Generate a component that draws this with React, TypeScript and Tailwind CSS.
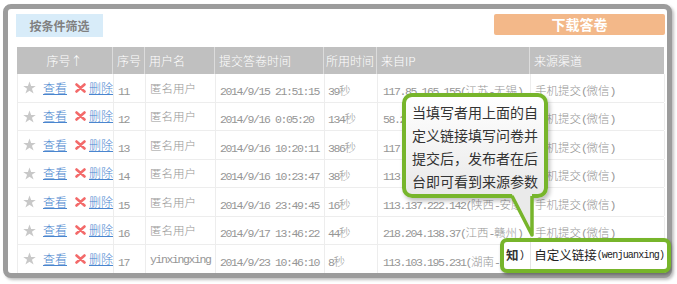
const cjk = "font-['Noto_Sans_CJK_SC',sans-serif]";

type Row = {
  n: number;
  user: string;
  time: string;
  dur: string;
  ip: string;
  ch: string;
};

const rows: Row[] = [
  { n: 11, user: "匿名用户", time: "2014/9/15 21:51:15", dur: "39秒", ip: "117.85.165.155(江苏-无锡)", ch: "手机提交(微信)" },
  { n: 12, user: "匿名用户", time: "2014/9/16 0:05:20", dur: "134秒", ip: "58.211.23.124(江苏-苏州)", ch: "手机提交(微信)" },
  { n: 13, user: "匿名用户", time: "2014/9/16 10:20:11", dur: "386秒", ip: "117.136.45.19(江苏-南京)", ch: "手机提交(微信)" },
  { n: 14, user: "匿名用户", time: "2014/9/16 10:23:47", dur: "38秒", ip: "113.57.182.9(湖北-武汉)", ch: "手机提交(微信)" },
  { n: 15, user: "匿名用户", time: "2014/9/16 23:49:45", dur: "16秒", ip: "113.137.222.142(陕西-安康)", ch: "手机提交(微信)" },
  { n: 16, user: "匿名用户", time: "2014/9/17 13:46:22", dur: "44秒", ip: "218.204.138.37(江西-赣州)", ch: "手机提交(微信)" },
  { n: 17, user: "yinxingxing", time: "2014/9/23 10:46:10", dur: "8秒", ip: "113.103.195.231(湖南-未知)", ch: "自定义链接(wenjuanxing)" },
];

// ascii runs in a narrow mono face, the rest in the CJK face
const Mixed = ({ text }: { text: string }) => {
  const parts = text.match(/[\x00-\x7f]+|[^\x00-\x7f]+/g) ?? [];
  return (
    <span className="whitespace-nowrap">
      {parts.map((p, i) =>
        /^[\x00-\x7f]/.test(p) ? (
          <span key={i} className="font-['Liberation_Mono',monospace] text-[11.5px] tracking-[-1.4px]">
            {p}
          </span>
        ) : (
          <span key={i} className={`${cjk} text-[11.5px] font-light`}>
            {p}
          </span>
        ),
      )}
    </span>
  );
};

const Star = () => (
  <svg width="13" height="13" viewBox="0 0 24 24" className="shrink-0">
    <polygon
      points="12,1 15,9 23.5,9 16.5,14.5 19.5,23 12,18 4.5,23 7.5,14.5 0.5,9 9,9"
      fill="#c8c8c8"
    />
  </svg>
);

const Cross = () => (
  <svg width="11" height="10" viewBox="0 0 11 10" className="shrink-0">
    <path d="M1.5 1.5 L9.5 8.5 M9.5 1.5 L1.5 8.5" stroke="#f36a6a" strokeWidth="2.6" strokeLinecap="round" />
  </svg>
);

const cols = "grid grid-cols-[96px_32px_70px_109px_53px_153px_134px]";

export default function App() {
  return (
    <div className="relative h-[284px] w-[677px] overflow-hidden bg-white pl-[3px] pt-[4px]">
      <div className="h-[274px] w-[669px] overflow-hidden rounded-[8px] border-[5px] border-[#9c9c9c] bg-white shadow-[2px_2px_3px_rgba(0,0,0,0.25)]">
        <div className="flex items-start justify-between pl-[8px] pr-[2px] pt-[5px]">
          <div className={`flex h-[23px] w-[87px] items-center justify-center bg-[#d8ecf9] text-[12px] font-bold text-[#808080] ${cjk}`}>
            按条件筛选
          </div>
          <div className={`flex h-[21px] w-[171px] items-center justify-center rounded-[2px] bg-[#f3b889] text-[14px] font-bold text-white ${cjk}`}>
            下载答卷
          </div>
        </div>

        <div className={`ml-[9px] mt-[10px] w-[647px] ${cjk}`}>
          <div className={`${cols} h-[27px] bg-[#c0c0c0] text-[12px] font-light text-white`}>
            <div className="flex items-center justify-center border-r border-[#dcdcdc]">序号↑</div>
            <div className="flex items-center border-r border-[#dcdcdc] pl-[4px]">序号</div>
            <div className="flex items-center border-r border-[#dcdcdc] pl-[4px]">用户名</div>
            <div className="flex items-center border-r border-[#dcdcdc] pl-[4px]">提交答卷时间</div>
            <div className="flex items-center border-r border-[#dcdcdc] pl-[2px]">所用时间</div>
            <div className="flex items-center border-r border-[#dcdcdc] pl-[4px]">来自IP</div>
            <div className="flex items-center pl-[4px]">来源渠道</div>
          </div>

          {rows.map((r) => (
            <div key={r.n} className={`${cols} h-[28.5px] border-b border-l border-[#ededed] text-[#969696]`}>
              <div className="flex items-center border-r border-[#ededed] pl-[5px]">
                <Star />
                <span className="ml-[7px] text-[12px] font-light text-[#4a86cf] underline">查看</span>
                <span className="ml-[8px]">
                  <Cross />
                </span>
                <span className="ml-[3px] text-[12px] font-light text-[#4a86cf] underline">删除</span>
              </div>
              <div className="flex items-center border-r border-[#ededed] pl-[4px]">
                <Mixed text={String(r.n)} />
              </div>
              <div className="flex items-center border-r border-[#ededed] pl-[4px] text-[12px]">
                <Mixed text={r.user} />
              </div>
              <div className="flex items-center border-r border-[#ededed] pl-[4px]">
                <Mixed text={r.time} />
              </div>
              <div className="flex items-center border-r border-[#ededed] pl-[3px]">
                <Mixed text={r.dur} />
              </div>
              <div className="flex items-center border-r border-[#ededed] pl-[5px]">
                <Mixed text={r.ip} />
              </div>
              <div className="flex items-center border-r border-[#ededed] pl-[4px]">
                <Mixed text={r.ch} />
              </div>
            </div>
          ))}
        </div>
      </div>

      {/* callout */}
      <div className="absolute left-[402px] top-[93px] h-[105px] w-[146px] rounded-[10px] border-[4px] border-[#77b52b] bg-gradient-to-b from-white to-[#e9e9e9] shadow-[2px_3px_4px_rgba(0,0,0,0.25)]">
        <div className={`pl-[6px] pt-[4px] text-[14px] leading-[23px] text-[#333] ${cjk}`}>
          当填写者用上面的自
          <br />
          定义链接填写问卷并
          <br />
          提交后，发布者在后
          <br />
          台即可看到来源参数
        </div>
      </div>
      <svg className="absolute left-[505px] top-[190px]" width="32" height="50" viewBox="0 0 32 50">
        <polygon points="5,0 27,0 27,46 " fill="#eaeaea" />
        <polyline points="7,6 27,45 27,6" fill="none" stroke="#77b52b" strokeWidth="3.5" strokeLinejoin="round" />
      </svg>

      {/* highlighted channel */}
      <div className="absolute left-[500px] top-[238px] flex h-[35px] w-[171px] items-center rounded-[7px] border-[4px] border-[#77b52b] bg-white shadow-[1px_2px_3px_rgba(0,0,0,0.3)]">
        <span className={`ml-[2px] text-[12.5px] font-bold text-[#333] ${cjk}`}>知</span>
        <span className="font-['Liberation_Mono',monospace] text-[11px] text-[#333]">)</span>
        <div className="ml-[5px] h-full border-l border-[#e4e4e4]" />
        <span className={`ml-[3px] text-[12.5px] text-[#222] ${cjk}`}>自定义链接</span>
        <span className="font-['Liberation_Mono',monospace] text-[10px] tracking-[-0.8px] text-[#222]">(wenjuanxing)</span>
      </div>
    </div>
  );
}
